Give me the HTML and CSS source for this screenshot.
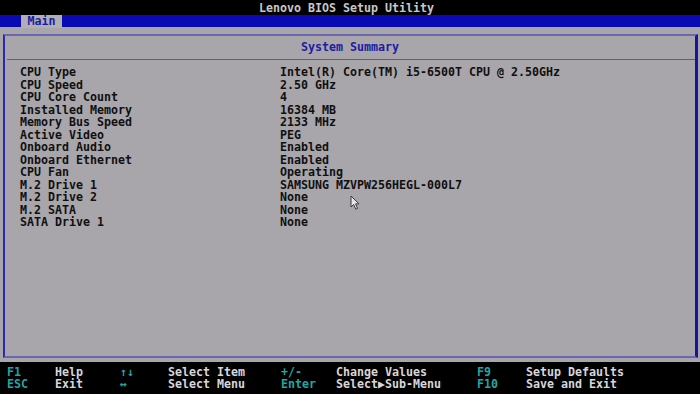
FILE: index.html
```html
<!DOCTYPE html>
<html>
<head>
<meta charset="utf-8">
<link rel="stylesheet" href="styles.css">
</head>
<body>
<div class="screen">
  <div class="titlebar">Lenovo BIOS Setup Utility</div>
  <div class="menubar"><div class="tab">Main</div></div>
  <div class="workarea">
    <div class="panel">
      <div class="panel-title">System Summary</div>
      <div class="separator"></div>
      <div class="rows">
        <div class="label">CPU Type</div><div class="value">Intel(R) Core(TM) i5-6500T CPU @ 2.50GHz</div>
        <div class="label">CPU Speed</div><div class="value">2.50 GHz</div>
        <div class="label">CPU Core Count</div><div class="value">4</div>
        <div class="label">Installed Memory</div><div class="value">16384 MB</div>
        <div class="label">Memory Bus Speed</div><div class="value">2133 MHz</div>
        <div class="label">Active Video</div><div class="value">PEG</div>
        <div class="label">Onboard Audio</div><div class="value">Enabled</div>
        <div class="label">Onboard Ethernet</div><div class="value">Enabled</div>
        <div class="label">CPU Fan</div><div class="value">Operating</div>
        <div class="label">M.2 Drive 1</div><div class="value">SAMSUNG MZVPW256HEGL-000L7</div>
        <div class="label">M.2 Drive 2</div><div class="value">None</div>
        <div class="label">M.2 SATA</div><div class="value">None</div>
        <div class="label">SATA Drive 1</div><div class="value">None</div>
      </div>
    </div>
  </div>
  <div class="footer">
    <span class="key">F1</span><span class="desc">Help</span><span class="key">↑↓</span><span class="desc">Select Item</span><span class="key">+/-</span><span class="desc">Change Values</span><span class="key">F9</span><span class="desc">Setup Defaults</span>
    <span class="key">ESC</span><span class="desc">Exit</span><span class="key">↔</span><span class="desc">Select Menu</span><span class="key">Enter</span><span class="desc">Select▶Sub-Menu</span><span class="key">F10</span><span class="desc">Save and Exit</span>
  </div>
  <svg class="cursor" width="12" height="16" viewBox="0 0 12 16">
    <path d="M1 1 L1 12 L3.6 9.6 L5.8 14.2 L7.6 13.4 L5.5 8.9 L9 8.9 Z" fill="#e6e4e8" stroke="#3a3a3a" stroke-width="1"/>
  </svg>
</div>
</body>
</html>
```
FILE: styles.css
```css
html, body {
  margin: 0;
  padding: 0;
  background: #000;
}
.screen {
  position: relative;
  width: 700px;
  height: 394px;
  overflow: hidden;
  background: #000;
  font-family: "DejaVu Sans Mono", "Liberation Mono", monospace;
  font-weight: bold;
  font-size: 11.63px;
}
.titlebar {
  box-sizing: border-box;
  height: 15px;
  padding: 2px 7px 0 0;
  line-height: 13px;
  text-align: center;
  color: #c9c7cb;
}
.menubar {
  height: 12px;
  background: #0a0ab4;
  padding-left: 21px;
  display: flex;
  align-items: flex-start;
}
.tab {
  width: 41px;
  height: 13px;
  line-height: 13px;
  background: #b1afb3;
  color: #1a1aa8;
  text-align: center;
}
.workarea {
  box-sizing: border-box;
  height: 335px;
  background: #a8a6aa;
  padding: 6px 2px 4px 3px;
  border-top: 1px solid #a8a6aa;
}
.panel {
  box-sizing: border-box;
  height: 100%;
  border-top: 2px solid #6a68ae;
  border-left: 2px solid #2a2aa8;
  border-bottom: 2px solid #6a68ae;
  border-right: 3px solid #1414a4;
}
.panel-title {
  height: 23px;
  line-height: 23px;
  text-align: center;
  color: #1c1ca4;
}
.separator {
  height: 1px;
  margin: 0 0 0 2px;
  background: #5a58aa;
}
.rows {
  display: grid;
  grid-template-columns: 260px auto;
  padding: 6px 0 0 15px;
  line-height: 12.5px;
  color: #101010;
}
.label, .value {
  white-space: pre;
}
.footer {
  display: grid;
  grid-template-columns: 48px 65px 48px 113px 55px 141px 49px auto;
  padding: 3.5px 0 0 7px;
  line-height: 12.5px;
  white-space: pre;
}
.key {
  color: #22a6a6;
}
.desc {
  color: #d8d6da;
}
.cursor {
  position: absolute;
  left: 350px;
  top: 195px;
}
```
